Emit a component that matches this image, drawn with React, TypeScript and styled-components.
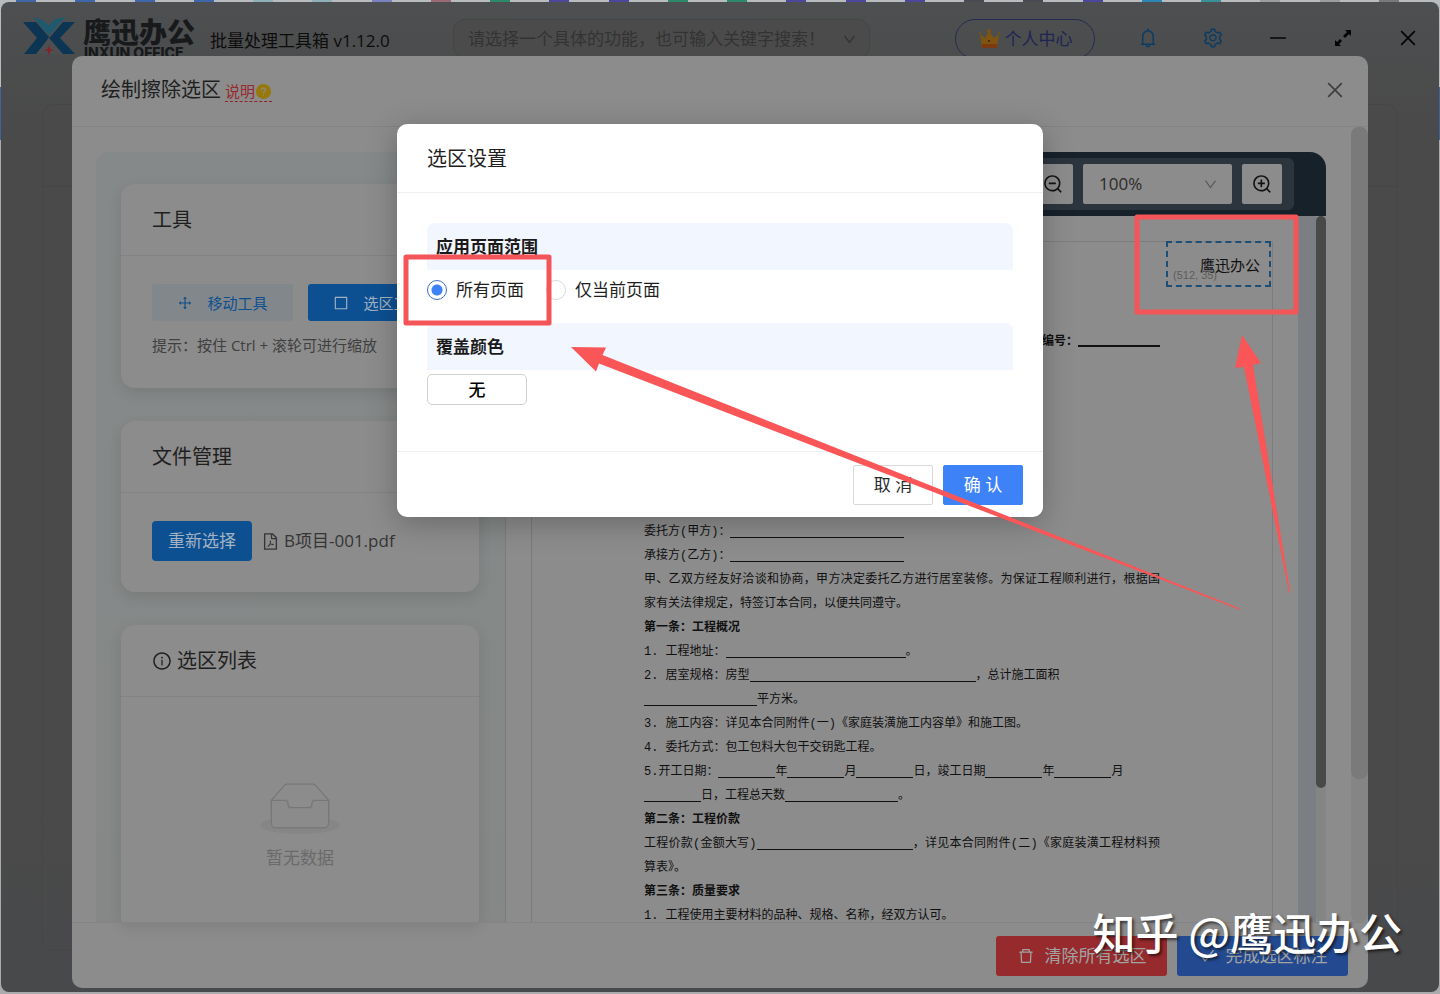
import React, { useState } from "react";
import styled, { createGlobalStyle, css } from "styled-components";
import {
  AiFillQuestionCircle,
  AiOutlineBell,
  AiOutlineBorder,
  AiOutlineCheck,
  AiOutlineClose,
  AiOutlineDelete,
  AiOutlineDown,
  AiOutlineDrag,
  AiOutlineFilePdf,
  AiOutlineInfoCircle,
  AiOutlineMinus,
  AiOutlineSetting,
  AiOutlineZoomIn,
  AiOutlineZoomOut,
} from "react-icons/ai";

const GlobalStyle = createGlobalStyle`
  * { box-sizing: border-box; }
  body {
    margin: 0;
    background: #b9bcbf;
    color: #1f1f1f;
    font-family: "Open Sans", "Noto Sans CJK SC", sans-serif;
    font-size: 17px;
    line-height: 24px;
    overflow: hidden;
  }
  button, input, select { font: inherit; color: inherit; margin: 0; }
  button { cursor: pointer; }
  h1, h2, h3, p { margin: 0; font-weight: 400; }
`;

/* Desktop behind the window */
const Desktop = styled.div`
  position: relative;
  display: flex;
  flex-direction: column;
  height: 100vh;
  padding: 0 1px 2px;
  background: linear-gradient(#b9bcbf 87px, #3f639f 87px, #3f639f 140px, #a9abad 140px);
`;
const TaskStrip = styled.div`
  display: flex;
  justify-content: space-between;
  height: 2px;
  padding: 0 40px 0 15px;
`;
const TaskMark = styled.span<{ $color: string }>`
  width: 20px;
  background: ${(p) => p.$color};
`;

/* Application window */
const AppWindow = styled.div`
  flex: 1;
  display: flex;
  flex-direction: column;
  border-radius: 8px;
  background: linear-gradient(#4d4f50, #4a4a4a 120px, #4a4a4a 80%, #48494b);
`;
const TopBar = styled.header`
  display: grid;
  grid-template-columns: 452px 417px 1fr;
  height: 76px;
`;
const Brand = styled.div`
  display: flex;
  padding: 14px 0 0 21px;
`;
const WordMark = styled.div`
  display: flex;
  flex-direction: column;
  width: 113px;
  margin: 0 14px 0 7px;
  color: #17191b;
`;
const BrandName = styled.span`
  font: 900 28px/30px "Noto Sans CJK SC", sans-serif;
`;
const BrandLatin = styled.span`
  padding-left: 1px;
  font: 800 14px/14px "Inter", sans-serif;
  white-space: nowrap;
`;
const Version = styled.h1`
  padding-top: 13px;
  color: #0c0c0c;
  font-size: 17px;
  line-height: 24px;
`;
const SearchBox = styled.label`
  display: flex;
  align-items: center;
  height: 40px;
  margin-top: 17px;
  padding: 0 12px 0 14px;
  border: 1px solid #444546;
  border-radius: 12px;
  background: #4b4b4b;
  color: #303030;
  font-size: 17px;
`;
const SearchInput = styled.input`
  flex: 1;
  min-width: 0;
  padding: 0;
  border: 0;
  outline: 0;
  background: none;
  &::placeholder { color: #333333; opacity: 1; }
`;
const TopActions = styled.div`
  display: flex;
  justify-content: flex-end;
  margin-right: -1px;
  padding-top: 17px;
`;
const UserButton = styled.button`
  display: flex;
  align-items: center;
  justify-content: center;
  gap: 4px;
  width: 140px;
  height: 40px;
  margin-right: 20px;
  border: 1px solid #252b50;
  border-radius: 20px;
  background: none;
  color: #1d2454;
`;
const WindowButton = styled.button<{ $color: string }>`
  display: grid;
  place-items: center;
  width: 65px;
  height: 38px;
  padding: 0;
  border: 0;
  background: none;
  color: ${(p) => p.$color};
  font-size: 22px;
`;
const Workspace = styled.div`
  flex: 1;
  margin: 26px 41px 41px;
  border: 1px solid #464646;
  border-radius: 12px;
`;
const WorkspaceHead = styled.div`
  height: 82px;
  border-bottom: 1px solid #454545;
`;

/* Large sheet */
const SheetLayer = styled.div`
  position: absolute;
  inset: 56px 0 6px;
  display: flex;
  justify-content: center;
`;
const Sheet = styled.section`
  display: flex;
  flex-direction: column;
  width: 90%;
  border-radius: 10px;
  background: #8c8c8c;
  overflow: hidden;
`;
const SheetHead = styled.header`
  display: flex;
  flex: none;
  align-items: center;
  height: 71px;
  padding: 0 22px 2px 29px;
  border-bottom: 1px solid #848484;
`;
const Title = styled.h2`
  font-size: 20px;
  line-height: 28px;
`;
const HelpLink = styled.a`
  display: flex;
  align-items: center;
  margin: 3px auto 0 4px;
  border-bottom: 1px dashed #8e2428;
  color: #97292d;
  font-size: 15px;
  line-height: 20px;
  text-decoration: none;
  svg { color: #97780a; font-size: 17px; }
`;
const IconButton = styled.button`
  display: grid;
  place-items: center;
  padding: 0;
  border: 0;
  background: none;
  color: #3f3f3f;
  font-size: 22px;
`;
const SheetBody = styled.div`
  display: flex;
  flex: 1;
  min-height: 0;
  padding-left: 24px;
`;
const Track = styled.div<{ $width: number }>`
  flex: none;
  width: ${(p) => p.$width}px;
  background: #858585;
  border-radius: 8px;
`;
const Thumb = styled.div<{ $size: string; $color: string }>`
  height: ${(p) => p.$size};
  border-radius: 8px;
  background: ${(p) => p.$color};
`;
const SheetFoot = styled.footer`
  display: flex;
  flex: none;
  justify-content: flex-end;
  gap: 10px;
  height: 66px;
  padding: 13px 20px;
  border-top: 1px solid #848484;
`;
const FootButton = styled.button<{ $color: string }>`
  display: flex;
  align-items: center;
  justify-content: center;
  gap: 10px;
  width: 171px;
  height: 40px;
  padding: 0;
  border: 0;
  border-radius: 3px;
  background: ${(p) => p.$color};
  color: #a3a3a3;
`;

/* Left column */
const SidePanel = styled.aside`
  display: flex;
  flex: none;
  flex-direction: column;
  gap: 33px;
  width: 410px;
  margin: 25px 25px 0 0;
  padding: 32px 26px 0 25px;
  border-right: 1px solid #7b7b7b;
  border-radius: 12px 0 0 0;
  background: linear-gradient(#868989, #868888);
`;
const Card = styled.section<{ $grow?: boolean }>`
  flex: ${(p) => (p.$grow ? "1 0 auto" : "none")};
  border-radius: ${(p) => (p.$grow ? "14px 14px 0 0" : "14px")};
  background: #8c8c8c;
  box-shadow: 0 5px 14px rgba(0, 0, 0, 0.1);
`;
const CardHead = styled.div`
  display: flex;
  align-items: center;
  gap: 5px;
  height: 72px;
  padding: 0 30px 0 31px;
  border-bottom: 1px solid #838383;
`;
const CardBody = styled.div`
  padding: 28px 0 31px 31px;
`;
const Row = styled.div<{ $gap: number }>`
  display: flex;
  align-items: center;
  gap: ${(p) => p.$gap}px;
`;
const ToolButton = styled.button<{ $active?: boolean }>`
  display: flex;
  align-items: center;
  justify-content: center;
  gap: 14px;
  width: 141px;
  height: 37px;
  padding: 0;
  border: 0;
  border-radius: 3px;
  background: ${(p) => (p.$active ? "#0d5092" : "#82878b")};
  color: ${(p) => (p.$active ? "#a3b2c2" : "#0d4f8f")};
  font-size: 15px;
`;
const Hint = styled.p`
  padding: 12px 0 0;
  color: #3f3f3f;
  font-size: 15px;
  line-height: 24px;
`;
const PickButton = styled.button`
  width: 100px;
  height: 40px;
  padding: 0;
  border: 0;
  border-radius: 4px;
  background: #0d5092;
  color: #a3b2c2;
`;
const FileName = styled.span`
  display: flex;
  align-items: center;
  gap: 4px;
  color: #353535;
`;
const Empty = styled.div`
  display: flex;
  flex-direction: column;
  align-items: center;
  gap: 12px;
  padding-top: 86px;
  color: #6a6a6a;
`;

/* Document viewer */
const Viewer = styled.main`
  display: flex;
  flex: 1;
  flex-direction: column;
  min-width: 0;
  margin: 25px 25px 0 0;
  border-radius: 16px 16px 0 0;
  overflow: hidden;
`;
const ViewerBar = styled.div`
  display: flex;
  flex: none;
  align-items: center;
  justify-content: flex-end;
  height: 64px;
  padding-right: 32px;
  background: #17212a;
`;
const ZoomGroup = styled.div`
  display: flex;
  gap: 10px;
  padding: 6px 12px;
  border-radius: 6px;
  background: #2c343e;
`;
const ZoomButton = styled.button`
  display: grid;
  place-items: center;
  width: 40px;
  height: 40px;
  padding: 0;
  border: 0;
  border-radius: 2px;
  background: #8c8c8c;
  color: #111;
  font-size: 22px;
`;
const ZoomField = styled.label`
  display: flex;
  align-items: center;
  width: 149px;
  height: 40px;
  padding: 0 14px 0 16px;
  border-radius: 2px;
  background: #8c8c8c;
  color: #5a5a5a;
  font-size: 15px;
`;
const ZoomSelect = styled.select`
  flex: 1;
  padding: 0;
  border: 0;
  outline: 0;
  appearance: none;
  background: none;
  color: #2b2b2b;
  font-size: 17px;
`;
const Canvas = styled.div`
  display: flex;
  flex: 1;
  min-height: 0;
  border-left: 1px solid #7a7a7a;
`;
const Gutter = styled.div`
  flex: none;
  width: 18px;
  background: #7b7f83;
`;
const Paper = styled.article`
  position: relative;
  flex: 1;
  margin: 25px 25px 0 0;
  padding: 88px 112px 0;
  border-top: 1px solid #7d7d7d;
  border-right: 1px solid #7d7d7d;
  color: #101010;
  font: 12px/24px "Liberation Mono", "Noto Sans CJK SC", monospace;
`;
const Serial = styled.p`
  display: flex;
  justify-content: flex-end;
  margin-bottom: 166px;
  font-weight: 700;
`;
const Line = styled.p<{ $bold?: boolean; $full?: boolean }>`
  white-space: pre;
  font-weight: ${(p) => (p.$bold ? 700 : 400)};
  ${(p) =>
    p.$full &&
    css`
      white-space: normal;
      text-align: justify;
      text-align-last: justify;
    `}
`;
const Blank = styled.span<{ $width: number; $thick?: boolean }>`
  display: inline-block;
  width: ${(p) => p.$width}px;
  height: ${(p) => (p.$thick ? 17 : 12)}px;
  border-bottom: ${(p) => (p.$thick ? 2 : 1)}px solid #101010;
  vertical-align: -3px;
`;
const Selection = styled.div`
  position: absolute;
  top: -1px;
  right: 1px;
  width: 105px;
  height: 46px;
  padding-left: 32px;
  border: 2px dashed #1c4f77;
  font: 15px/44px "Noto Sans CJK SC", sans-serif;
`;
const Coordinates = styled.span`
  position: absolute;
  left: 5px;
  bottom: 3px;
  color: #5c5c5c;
  font: 11px/14px "Liberation Sans", sans-serif;
`;

/* Settings dialog */
const DialogLayer = styled.div`
  position: absolute;
  inset: 0;
  display: flex;
  align-items: flex-start;
  justify-content: center;
  padding-top: 124px;
`;
const Dialog = styled.form`
  width: 646px;
  border-radius: 10px;
  background: #fff;
  box-shadow: 0 6px 30px rgba(0, 0, 0, 0.25);
`;
const DialogHead = styled.header`
  display: flex;
  align-items: center;
  height: 69px;
  padding: 2px 30px 0;
  border-bottom: 1px solid #f0f0f0;
`;
const DialogBody = styled.div`
  padding: 30px 30px 46px;
`;
const SectionTitle = styled.h3`
  height: 47px;
  padding: 12px 9px 0;
  border-radius: 8px 8px 0 0;
  background: #f2f6ff;
  color: #1a1a1a;
  font-size: 17px;
  font-weight: 700;
  line-height: 24px;
`;
const RadioRow = styled.div`
  display: flex;
  gap: 22px;
  height: 53px;
  padding-top: 8px;
`;
const Choice = styled.label`
  display: flex;
  align-items: center;
  gap: 9px;
  height: 24px;
`;
const Radio = styled.input`
  appearance: none;
  width: 20px;
  height: 20px;
  border: 1px solid #d9d9d9;
  border-radius: 50%;
  background: #fff;
  &:checked {
    border-color: #3b6fc4;
    background: radial-gradient(circle, #3d82f7 5px, #fff 6px);
  }
`;
const ColorButton = styled.button`
  width: 100px;
  height: 31px;
  margin-top: 4px;
  padding: 0;
  border: 1px solid #d0d0d0;
  border-radius: 5px;
  background: #fff;
  color: #000;
  font-weight: 500;
`;
const DialogFoot = styled.footer`
  display: flex;
  justify-content: flex-end;
  gap: 10px;
  padding: 13px 20px 12px;
  border-top: 1px solid #f0f0f0;
`;
const DialogButton = styled.button<{ $primary?: boolean }>`
  width: 80px;
  height: 40px;
  padding: 0;
  border: 1px solid ${(p) => (p.$primary ? "#3d82f7" : "#d9d9d9")};
  border-radius: 2px;
  background: ${(p) => (p.$primary ? "#3d82f7" : "#fff")};
  color: ${(p) => (p.$primary ? "#fff" : "#2a2a2a")};
`;

/* Marks and signature over everything */
const Marks = styled.svg`
  position: absolute;
  top: 0;
  left: 0;
  width: 100%;
  pointer-events: none;
`;
const Signature = styled.div`
  position: absolute;
  right: 38px;
  bottom: 35px;
  color: #fff;
  font: 500 43px/56px "Noto Sans CJK SC", sans-serif;
  text-shadow: 2px 2px 3px rgba(0, 0, 0, 0.6);
  white-space: pre;
  pointer-events: none;
`;

const Logo = () => (
  <svg width="54" height="40" viewBox="0 0 54 40" aria-hidden="true">
    <path d="M1 6h13l13 15L16 38H2l13-16z" fill="#0b3552" />
    <path d="M53 6H41L30 19l-3 3 14 16h12L38 22z" fill="#0b3552" />
    <path d="M11 2c7 0 11 2 16 8 4-6 9-9 17-8-6 3-9 8-12 12l-5 5-5-5C19 10 16 5 11 2z" fill="#1d5a70" />
    <path d="M27 22l13 16H14z" fill="#4d4f50" />
    <path d="M27 29l1 4 4 1-4 1-1 5-1-5-4-1 4-1z" fill="#8d1d20" />
  </svg>
);

const Crown = () => (
  <svg width="23" height="20" viewBox="0 0 23 20" aria-hidden="true">
    <path d="M2 5l5 4 4-7 5 7 5-4-2 14H4z" fill="#7d5410" />
    <path d="M4 15h15v4H4z" fill="#7d3a10" />
    <circle cx="2" cy="4" r="1" fill="#7d5410" />
    <circle cx="11" cy="2" r="2" fill="#7d5410" />
    <circle cx="21" cy="4" r="1" fill="#7d5410" />
    <circle cx="11" cy="12" r="1" fill="#5a1212" />
  </svg>
);

const Expand = () => (
  <svg width="18" height="18" viewBox="0 0 18 18" aria-hidden="true">
    <path
      d="M11 1h6v6l-2-2-4 4-2-2 4-4zM1 11v6h6l-2-2 3-3-2-2-3 3z"
      fill="#050505"
    />
  </svg>
);

const EmptyBox = () => (
  <svg width="80" height="51" viewBox="0 0 64 41" aria-hidden="true">
    <g transform="translate(0 1)" fill="none">
      <ellipse cx="32" cy="33" rx="32" ry="7" fill="#868686" />
      <g stroke="#777777">
        <path
          fill="#8c8c8c"
          d="M55 12.76L44.854 1.258C44.367.474 43.656 0 42.907 0H21.093c-.749 0-1.46.474-1.947 1.257L9 12.761V22h46v-9.24z"
        />
        <path
          fill="#8b8b8b"
          d="M41.613 15.931c0-1.605.994-2.93 2.227-2.931H55v18.137C55 33.26 53.68 35 52.05 35h-40.1C10.32 35 9 33.259 9 31.137V13h11.16c1.233 0 2.227 1.323 2.227 2.928v.022c0 1.605 1.005 2.901 2.237 2.901h14.752c1.232 0 2.237-1.308 2.237-2.913v-.007z"
        />
      </g>
    </g>
  </svg>
);

const BLUE = "#3f66a8";
const VIOLET = "#4c479b";
const GREEN = "#2c8a68";
const taskMarks = [
  BLUE, BLUE, BLUE, BLUE, "#8fb0b8", "#8fb0b8", "#7a83c0", "#9c6a74",
  GREEN, VIOLET, VIOLET, GREEN, GREEN, VIOLET, VIOLET, VIOLET,
  "#4a4a55", "#4a4a55", VIOLET, "#2a87b5", "#3a9098", "#9a9da0", "#9a9da0", "#77797c",
];

/* Numbers stand for fill-in blanks of that width */
type DocLine = { parts: (string | number)[]; bold?: boolean; full?: boolean };
const contract: DocLine[] = [
  { parts: ["委托方(甲方)：", 174] },
  { parts: ["承接方(乙方)：", 174] },
  { parts: ["甲、乙双方经友好洽谈和协商，甲方决定委托乙方进行居室装修。为保证工程顺利进行，根据国"], full: true },
  { parts: ["家有关法律规定，特签订本合同，以便共同遵守。"] },
  { parts: ["第一条：工程概况"], bold: true },
  { parts: ["1. 工程地址：", 180, "。"] },
  { parts: ["2. 居室规格：房型", 226, "，总计施工面积"] },
  { parts: [113, "平方米。"] },
  { parts: ["3. 施工内容：详见本合同附件(一)《家庭装潢施工内容单》和施工图。"] },
  { parts: ["4. 委托方式：包工包料大包干交钥匙工程。"] },
  { parts: ["5.开工日期：", 57, "年", 57, "月", 57, "日，竣工日期", 57, "年", 57, "月"] },
  { parts: [57, "日，工程总天数", 113, "。"] },
  { parts: ["第二条：工程价款"], bold: true },
  { parts: ["工程价款(金额大写)", 156, "，详见本合同附件(二)《家庭装潢工程材料预"], full: true },
  { parts: ["算表》。"] },
  { parts: ["第三条：质量要求"], bold: true },
  { parts: ["1. 工程使用主要材料的品种、规格、名称，经双方认可。"] },
];

export default function App() {
  const [scope, setScope] = useState("all");
  return (
    <Desktop>
      <GlobalStyle />
      <TaskStrip>
        {taskMarks.map((c, i) => (
          <TaskMark key={i} $color={c} />
        ))}
      </TaskStrip>
      <AppWindow>
        <TopBar>
          <Brand>
            <Logo />
            <WordMark>
              <BrandName>鹰迅办公</BrandName>
              <BrandLatin>INXUN OFFICE</BrandLatin>
            </WordMark>
            <Version>批量处理工具箱 v1.12.0</Version>
          </Brand>
          <SearchBox>
            <SearchInput aria-label="搜索功能" placeholder="请选择一个具体的功能，也可输入关键字搜索！" />
            <AiOutlineDown size={15} />
          </SearchBox>
          <TopActions>
            <UserButton>
              <Crown />
              个人中心
            </UserButton>
            <WindowButton $color="#0d3c63" aria-label="通知"><AiOutlineBell /></WindowButton>
            <WindowButton $color="#0d3c63" aria-label="设置"><AiOutlineSetting /></WindowButton>
            <WindowButton $color="#050505" aria-label="最小化"><AiOutlineMinus /></WindowButton>
            <WindowButton $color="#050505" aria-label="最大化"><Expand /></WindowButton>
            <WindowButton $color="#050505" aria-label="关闭"><AiOutlineClose /></WindowButton>
          </TopActions>
        </TopBar>
        <Workspace>
          <WorkspaceHead />
        </Workspace>
      </AppWindow>

      <SheetLayer>
        <Sheet>
          <SheetHead>
            <Title>绘制擦除选区</Title>
            <HelpLink href="#help">
              说明
              <AiFillQuestionCircle />
            </HelpLink>
            <IconButton aria-label="关闭选区窗口"><AiOutlineClose /></IconButton>
          </SheetHead>
          <SheetBody>
            <SidePanel>
              <Card>
                <CardHead><Title>工具</Title></CardHead>
                <CardBody>
                  <Row $gap={15}>
                    <ToolButton><AiOutlineDrag size={16} />移动工具</ToolButton>
                    <ToolButton $active><AiOutlineBorder size={16} />选区工具</ToolButton>
                  </Row>
                  <Hint>提示：按住 Ctrl + 滚轮可进行缩放</Hint>
                </CardBody>
              </Card>
              <Card>
                <CardHead><Title>文件管理</Title></CardHead>
                <CardBody>
                  <Row $gap={9}>
                    <PickButton>重新选择</PickButton>
                    <FileName><AiOutlineFilePdf size={19} />B项目-001.pdf</FileName>
                  </Row>
                </CardBody>
              </Card>
              <Card $grow>
                <CardHead>
                  <AiOutlineInfoCircle size={20} />
                  <Title>选区列表</Title>
                </CardHead>
                <Empty>
                  <EmptyBox />
                  暂无数据
                </Empty>
              </Card>
            </SidePanel>
            <Viewer>
              <ViewerBar>
                <ZoomGroup>
                  <ZoomButton aria-label="缩小"><AiOutlineZoomOut /></ZoomButton>
                  <ZoomField>
                    <ZoomSelect aria-label="缩放比例"><option>100%</option></ZoomSelect>
                    <AiOutlineDown />
                  </ZoomField>
                  <ZoomButton aria-label="放大"><AiOutlineZoomIn /></ZoomButton>
                </ZoomGroup>
              </ViewerBar>
              <Canvas>
                <Paper>
                  <Serial>编号：<Blank $width={82} $thick /></Serial>
                  {contract.map((line, i) => (
                    <Line key={i} $bold={line.bold} $full={line.full}>
                      {line.parts.map((part, j) =>
                        typeof part === "number" ? <Blank key={j} $width={part} /> : part
                      )}
                    </Line>
                  ))}
                  <Selection>
                    鹰迅办公
                    <Coordinates>(512, 35)</Coordinates>
                  </Selection>
                </Paper>
                <Gutter />
                <Track $width={10}><Thumb $size="81%" $color="#494949" /></Track>
              </Canvas>
            </Viewer>
            <Track $width={17}><Thumb $size="82%" $color="#7a7a7a" /></Track>
          </SheetBody>
          <SheetFoot>
            <FootButton $color="#962a2c"><AiOutlineDelete size={18} />清除所有选区</FootButton>
            <FootButton $color="#234a90"><AiOutlineCheck size={18} />完成选区标注</FootButton>
          </SheetFoot>
        </Sheet>
      </SheetLayer>

      <DialogLayer>
        <Dialog onSubmit={(e) => e.preventDefault()}>
          <DialogHead><Title>选区设置</Title></DialogHead>
          <DialogBody>
            <SectionTitle>应用页面范围</SectionTitle>
            <RadioRow>
              <Choice>
                <Radio type="radio" name="scope" checked={scope === "all"} onChange={() => setScope("all")} />
                所有页面
              </Choice>
              <Choice>
                <Radio type="radio" name="scope" checked={scope === "current"} onChange={() => setScope("current")} />
                仅当前页面
              </Choice>
            </RadioRow>
            <SectionTitle>覆盖颜色</SectionTitle>
            <ColorButton type="button">无</ColorButton>
          </DialogBody>
          <DialogFoot>
            <DialogButton type="button">取 消</DialogButton>
            <DialogButton type="submit" $primary>确 认</DialogButton>
          </DialogFoot>
        </Dialog>
      </DialogLayer>

      <Marks viewBox="0 0 1440 994" aria-hidden="true">
        <g fill="none" stroke="#f45558" strokeWidth="5" strokeLinejoin="round">
          <rect x="406" y="257" width="143" height="66" />
          <rect x="1137" y="217" width="159" height="95" />
        </g>
        <g fill="#fa5557">
          <path d="M571 347L606 347.500L602.500 355L1240 608.500L1239 609.500L599 363.500L596 371.500z" />
          <path d="M1242 335L1261 363L1253 365L1290 592L1289 593L1244 367L1235 368z" />
        </g>
      </Marks>
      <Signature>知乎 @鹰迅办公</Signature>
    </Desktop>
  );
}
